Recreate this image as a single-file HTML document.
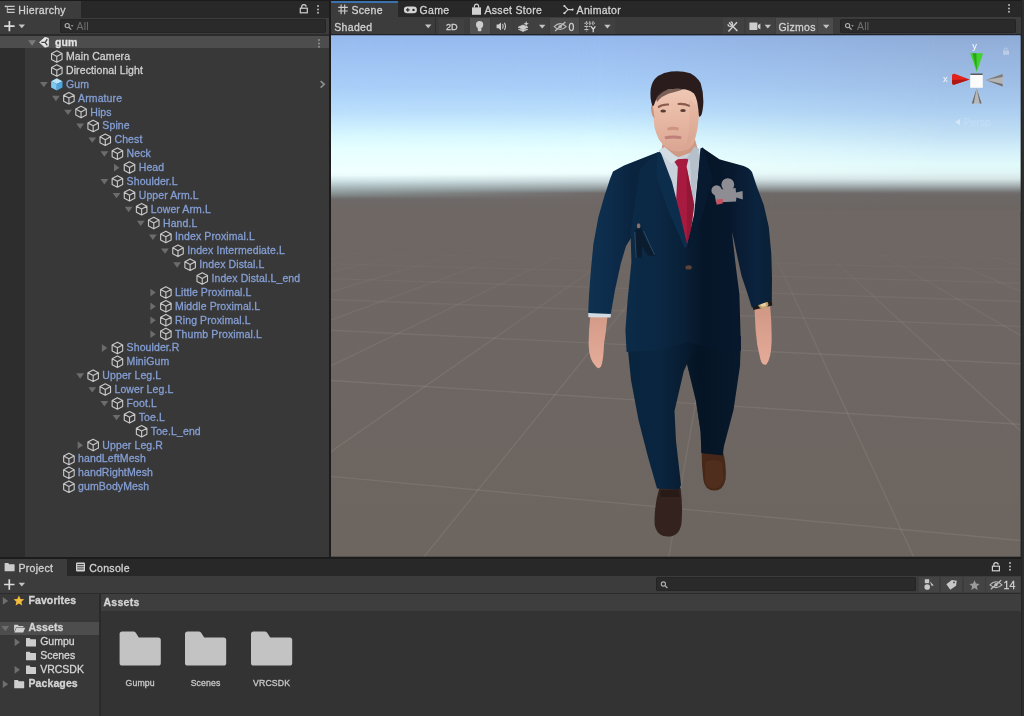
<!DOCTYPE html>
<html lang="en"><head><meta charset="utf-8"><title>Unity - gum</title>
<style>
html,body{margin:0;padding:0;background:#383838;}
body{width:1024px;height:716px;overflow:hidden;font-family:"Liberation Sans",sans-serif;font-size:10.5px;color:#d0d0d0;}
#app{filter:blur(0.45px);will-change:transform;position:relative;width:1024px;height:716px;overflow:hidden;background:#383838;}
#app div,#app svg,#app span{position:absolute;}
.t{-webkit-text-stroke:0.3px;white-space:nowrap;line-height:13.9px;height:13.9px;letter-spacing:0.1px;}
.b{font-weight:bold;letter-spacing:0.1px;}
.ic{overflow:visible;}
#hier{left:0;top:0;width:329px;height:557px;}
.gutter{left:0;top:35px;width:25.4px;height:522px;background:#2d2d2d;}
.scenerow{left:0;width:329px;height:12.4px;background:#4d4d4d;}
.kebab{width:2px;height:2px;background:#b8b8b8;border-radius:1px;box-shadow:0 3.4px 0 #b8b8b8,0 6.8px 0 #b8b8b8;}
.tabbar{background:#282828;height:17.5px;}
.tab{background:#3c3c3c;height:17.5px;top:0;}
.tl{-webkit-text-stroke:0.3px;white-space:nowrap;line-height:17px;height:17px;letter-spacing:0.3px;color:#d2d2d2;top:2.2px;}
.toolbar{background:#3c3c3c;height:17.5px;}
.search{background:#2a2a2a;border-radius:2.5px;height:13px;box-shadow:inset 0 0 0 0.6px #212121;}
.ph{color:#707070;white-space:nowrap;line-height:13px;letter-spacing:0.2px;}

</style></head>
<body>
<div id="app">
<div style="left:0;top:0;width:1024px;height:18px;background:#282828"></div>
<div style="left:0;top:0;width:1024px;height:1px;background:#1b1b1b"></div>
<div class="tab" style="left:0;top:1px;width:80.5px;height:17px"></div>

<div class="tl" style="left:18.3px">Hierarchy</div>

<div class="kebab" style="left:317.2px;top:4.6px;background:#b8b8b8;box-shadow:0 3.4px 0 #b8b8b8,0 6.8px 0 #b8b8b8"></div>
<div class="toolbar" style="left:0;top:18px;width:329px;height:17px"></div>


<div class="search" style="left:60px;top:19.2px;width:265.5px;height:13.6px"></div>

<div class="ph" style="left:76.5px;top:19.6px">All</div>
<div style="left:0;top:34.2px;width:329px;height:1.6px;background:#2b2b2b"></div>
<div style="left:329px;top:0;width:2px;height:558px;background:#1c1c1c"></div>
<div class="tab" style="left:331px;top:1px;width:67.2px;height:16.4px"></div>
<div style="left:331px;top:1px;width:67.2px;height:1.8px;background:#3a72ad"></div>

<div class="tl" style="left:351.5px">Scene</div>

<div class="tl" style="left:419.6px">Game</div>

<div class="tl" style="left:484.5px">Asset Store</div>

<div class="tl" style="left:576.6px">Animator</div>
<div class="kebab" style="left:1008.4px;top:4.4px;background:#b8b8b8;box-shadow:0 3.4px 0 #b8b8b8,0 6.8px 0 #b8b8b8"></div>
<div class="toolbar" style="left:331px;top:17.2px;width:690px;height:17.6px"></div>
<div class="tl" style="left:334.3px;top:18.8px;line-height:17px">Shaded</div>

<div style="left:434.6px;top:18px;width:1px;height:17px;background:#2e2e2e"></div>
<div style="left:439px;top:18.6px;width:25px;height:15.6px;background:#414141"></div>
<div class="tl" style="left:446px;top:18.6px;font-size:9.2px;letter-spacing:0">2D</div>
<div style="left:469.6px;top:18.4px;width:20.4px;height:16px;background:#515151"></div>

<div style="left:491px;top:18.4px;width:21.6px;height:16px;background:#404040"></div>

<div style="left:513.6px;top:18.4px;width:35.6px;height:16px;background:#404040"></div>


<div style="left:550.4px;top:18.4px;width:28.4px;height:16px;background:#4a4a4a"></div>

<div class="tl" style="left:568.6px;top:18.8px;letter-spacing:0">0</div>
<div style="left:580px;top:18.4px;width:34.6px;height:16px;background:#404040"></div>


<div style="left:722.6px;top:18.4px;width:21px;height:16px;background:#414141"></div>

<div style="left:745.6px;top:18.4px;width:29px;height:16px;background:#414141"></div>


<div style="left:775.8px;top:18.4px;width:57.6px;height:16px;background:#4b4b4b"></div>
<div class="tl" style="left:778.4px;top:18.8px">Gizmos</div>
<div style="left:816.6px;top:18.4px;width:1px;height:16px;background:#424242"></div>

<div class="search" style="left:840.4px;top:19.2px;width:176px;height:13.6px"></div>

<div class="ph" style="left:857px;top:19.6px">All</div>
<div style="left:331px;top:34px;width:690px;height:1.6px;background:#1f2329"></div>
<div style="left:1020.6px;top:0;width:3.4px;height:716px;background:#232323"></div>
<div style="left:1022.4px;top:0;width:1.6px;height:716px;background:#2d2d2d"></div>
<div id="hier">
<div class="gutter"></div>
<div class="scenerow" style="top:35.90px"></div>


<div class="t b" style="left:55.0px;top:36.15px;color:#e2e2e2">gum</div>
<div class="kebab" style="left:317.5px;top:38.50px;background:#909090;box-shadow:0 3.4px 0 #909090,0 6.8px 0 #909090"></div>

<div class="t" style="left:66.00px;top:50.03px;color:#d0d0d0">Main Camera</div>

<div class="t" style="left:66.00px;top:63.90px;color:#d0d0d0">Directional Light</div>



<div class="t" style="left:66.00px;top:77.78px;color:#859fd4">Gum</div>


<div class="t" style="left:78.12px;top:91.65px;color:#859fd4">Armature</div>


<div class="t" style="left:90.24px;top:105.53px;color:#859fd4">Hips</div>


<div class="t" style="left:102.36px;top:119.40px;color:#859fd4">Spine</div>


<div class="t" style="left:114.48px;top:133.27px;color:#859fd4">Chest</div>


<div class="t" style="left:126.60px;top:147.15px;color:#859fd4">Neck</div>


<div class="t" style="left:138.72px;top:161.02px;color:#859fd4">Head</div>


<div class="t" style="left:126.60px;top:174.90px;color:#859fd4">Shoulder.L</div>


<div class="t" style="left:138.72px;top:188.77px;color:#859fd4">Upper Arm.L</div>


<div class="t" style="left:150.84px;top:202.65px;color:#859fd4">Lower Arm.L</div>


<div class="t" style="left:162.96px;top:216.52px;color:#859fd4">Hand.L</div>


<div class="t" style="left:175.08px;top:230.40px;color:#859fd4">Index Proximal.L</div>


<div class="t" style="left:187.20px;top:244.27px;color:#859fd4">Index Intermediate.L</div>


<div class="t" style="left:199.32px;top:258.15px;color:#859fd4">Index Distal.L</div>

<div class="t" style="left:211.44px;top:272.02px;color:#859fd4">Index Distal.L_end</div>


<div class="t" style="left:175.08px;top:285.90px;color:#859fd4">Little Proximal.L</div>


<div class="t" style="left:175.08px;top:299.77px;color:#859fd4">Middle Proximal.L</div>


<div class="t" style="left:175.08px;top:313.65px;color:#859fd4">Ring Proximal.L</div>


<div class="t" style="left:175.08px;top:327.52px;color:#859fd4">Thumb Proximal.L</div>


<div class="t" style="left:126.60px;top:341.40px;color:#859fd4">Shoulder.R</div>

<div class="t" style="left:126.60px;top:355.27px;color:#859fd4">MiniGum</div>


<div class="t" style="left:102.36px;top:369.15px;color:#859fd4">Upper Leg.L</div>


<div class="t" style="left:114.48px;top:383.02px;color:#859fd4">Lower Leg.L</div>


<div class="t" style="left:126.60px;top:396.90px;color:#859fd4">Foot.L</div>


<div class="t" style="left:138.72px;top:410.77px;color:#859fd4">Toe.L</div>

<div class="t" style="left:150.84px;top:424.65px;color:#859fd4">Toe.L_end</div>


<div class="t" style="left:102.36px;top:438.52px;color:#859fd4">Upper Leg.R</div>

<div class="t" style="left:78.12px;top:452.40px;color:#859fd4">handLeftMesh</div>

<div class="t" style="left:78.12px;top:466.27px;color:#859fd4">handRightMesh</div>

<div class="t" style="left:78.12px;top:480.15px;color:#859fd4">gumBodyMesh</div>
</div>
<svg id="scene" style="left:0;top:0" width="1024" height="716" viewBox="0 0 1024 716">
<defs>
<linearGradient id="sky" gradientUnits="userSpaceOnUse" x1="0" y1="35" x2="0" y2="210">
<stop offset="0.0000" stop-color="#96b9ee"/>
<stop offset="0.1429" stop-color="#9fc3f3"/>
<stop offset="0.2914" stop-color="#a8cef8"/>
<stop offset="0.4343" stop-color="#b9defc"/>
<stop offset="0.5771" stop-color="#d7f8ff"/>
<stop offset="0.6514" stop-color="#e6ffff"/>
<stop offset="0.7714" stop-color="#f0ffff"/>
<stop offset="0.7943" stop-color="#ecfcfc"/>
<stop offset="0.8343" stop-color="#c8d7da"/>
<stop offset="0.8743" stop-color="#96a0a2"/>
<stop offset="0.8937" stop-color="#7d8080"/>
<stop offset="0.9040" stop-color="#706a69"/>
<stop offset="1.0000" stop-color="#6e6764"/>
</linearGradient>
<linearGradient id="skyL" gradientUnits="userSpaceOnUse" x1="0" y1="35" x2="0" y2="210">
<stop offset="0.0000" stop-color="#96b9ee"/>
<stop offset="0.1429" stop-color="#9fc3f3"/>
<stop offset="0.2914" stop-color="#a8cef8"/>
<stop offset="0.4343" stop-color="#b9defc"/>
<stop offset="0.5771" stop-color="#d7f8ff"/>
<stop offset="0.6514" stop-color="#e6ffff"/>
<stop offset="0.7771" stop-color="#f0ffff"/>
<stop offset="0.8023" stop-color="#ecfcfc"/>
<stop offset="0.8343" stop-color="#cde1e4"/>
<stop offset="0.8743" stop-color="#a5b4b6"/>
<stop offset="0.9143" stop-color="#828a8a"/>
<stop offset="0.9337" stop-color="#706e6e"/>
<stop offset="0.9429" stop-color="#6e6968"/>
<stop offset="1.0000" stop-color="#6e6764"/>
</linearGradient>
<linearGradient id="skyR" gradientUnits="userSpaceOnUse" x1="0" y1="35" x2="0" y2="210">
<stop offset="0.0000" stop-color="#8facd7"/>
<stop offset="0.2914" stop-color="#a0c0e8"/>
<stop offset="0.4343" stop-color="#accef0"/>
<stop offset="0.5771" stop-color="#c3e1f5"/>
<stop offset="0.6514" stop-color="#d2eefa"/>
<stop offset="0.7429" stop-color="#e1fafa"/>
<stop offset="0.7829" stop-color="#e0f6f6"/>
<stop offset="0.8217" stop-color="#d7e6e8"/>
<stop offset="0.8503" stop-color="#b4c0c2"/>
<stop offset="0.8789" stop-color="#8c9293"/>
<stop offset="0.9029" stop-color="#706c6b"/>
<stop offset="0.9200" stop-color="#6c6866"/>
<stop offset="1.0000" stop-color="#6c6562"/>
</linearGradient>
<linearGradient id="hfade" gradientUnits="userSpaceOnUse" x1="600" y1="0" x2="940" y2="0"><stop offset="0" stop-color="#fff" stop-opacity="0"/><stop offset="1" stop-color="#fff" stop-opacity="1"/></linearGradient>
<mask id="hmask" maskUnits="userSpaceOnUse" x="331" y="30" width="700" height="190"><rect x="331" y="30" width="700" height="190" fill="url(#hfade)"/></mask>
<linearGradient id="hfadeL" gradientUnits="userSpaceOnUse" x1="340" y1="0" x2="600" y2="0"><stop offset="0" stop-color="#fff" stop-opacity="1"/><stop offset="1" stop-color="#fff" stop-opacity="0"/></linearGradient>
<mask id="hmaskL" maskUnits="userSpaceOnUse" x="331" y="30" width="700" height="190"><rect x="331" y="30" width="700" height="190" fill="url(#hfadeL)"/></mask>
<linearGradient id="ground" gradientUnits="userSpaceOnUse" x1="0" y1="210" x2="0" y2="557">
<stop offset="0" stop-color="#6e6764"/>
<stop offset="1" stop-color="#6c6560"/>
</linearGradient>
<clipPath id="sc"><rect x="331.0" y="35.5" width="689.6" height="521.1"/></clipPath>
</defs>
<g clip-path="url(#sc)">
<rect x="331.0" y="35" width="689.6" height="176" fill="url(#sky)"/>
<rect x="331.0" y="35" width="689.6" height="176" fill="url(#skyL)" mask="url(#hmaskL)"/>
<rect x="331.0" y="35" width="689.6" height="176" fill="url(#skyR)" mask="url(#hmask)"/>
<rect x="331.0" y="210" width="689.6" height="347" fill="url(#ground)"/>
<linearGradient id="gfade" gradientUnits="userSpaceOnUse" x1="0" y1="215.0" x2="0" y2="558.6"><stop offset="0.000" stop-color="#fff" stop-opacity="0.000"/><stop offset="0.043" stop-color="#fff" stop-opacity="0.000"/><stop offset="0.087" stop-color="#fff" stop-opacity="0.000"/><stop offset="0.130" stop-color="#fff" stop-opacity="0.209"/><stop offset="0.174" stop-color="#fff" stop-opacity="0.402"/><stop offset="0.217" stop-color="#fff" stop-opacity="0.546"/><stop offset="0.261" stop-color="#fff" stop-opacity="0.658"/><stop offset="0.304" stop-color="#fff" stop-opacity="0.747"/><stop offset="0.348" stop-color="#fff" stop-opacity="0.820"/><stop offset="0.391" stop-color="#fff" stop-opacity="0.881"/><stop offset="0.435" stop-color="#fff" stop-opacity="0.933"/><stop offset="0.478" stop-color="#fff" stop-opacity="0.977"/><stop offset="0.522" stop-color="#fff" stop-opacity="1.000"/><stop offset="0.565" stop-color="#fff" stop-opacity="1.000"/><stop offset="0.609" stop-color="#fff" stop-opacity="1.000"/><stop offset="0.652" stop-color="#fff" stop-opacity="1.000"/><stop offset="0.696" stop-color="#fff" stop-opacity="1.000"/><stop offset="0.739" stop-color="#fff" stop-opacity="1.000"/><stop offset="0.783" stop-color="#fff" stop-opacity="1.000"/><stop offset="0.826" stop-color="#fff" stop-opacity="1.000"/><stop offset="0.870" stop-color="#fff" stop-opacity="1.000"/><stop offset="0.913" stop-color="#fff" stop-opacity="1.000"/><stop offset="0.957" stop-color="#fff" stop-opacity="1.000"/><stop offset="1.000" stop-color="#fff" stop-opacity="1.000"/></linearGradient><mask id="gmask" maskUnits="userSpaceOnUse" x="327.0" y="213.0" width="697.6" height="349.6"><rect x="327.0" y="213.0" width="697.6" height="349.6" fill="url(#gfade)"/></mask><g mask="url(#gmask)"><g stroke="#e8dcd0" stroke-opacity="0.10" stroke-width="1.4"><line x1="329.0" y1="476.2" x2="1022.6" y2="540.7"/><line x1="329.0" y1="380.3" x2="1022.6" y2="424.6"/><line x1="329.0" y1="330.2" x2="1022.6" y2="363.9"/><line x1="329.0" y1="299.4" x2="1022.6" y2="326.6"/><line x1="329.0" y1="278.6" x2="1022.6" y2="301.4"/><line x1="329.0" y1="263.6" x2="1022.6" y2="283.2"/><line x1="329.0" y1="252.2" x2="1022.6" y2="269.5"/><line x1="329.0" y1="243.3" x2="1022.6" y2="258.7"/><line x1="329.0" y1="236.2" x2="1022.6" y2="250.1"/><line x1="329.0" y1="230.3" x2="1022.6" y2="243.0"/><line x1="329.0" y1="225.4" x2="1022.6" y2="237.0"/><line x1="329.0" y1="221.3" x2="1022.6" y2="232.0"/><line x1="329.0" y1="217.7" x2="1022.6" y2="227.7"/><line x1="359.1" y1="215.0" x2="1022.6" y2="223.9"/><line x1="577.2" y1="215.0" x2="1022.6" y2="220.6"/><line x1="795.2" y1="215.0" x2="1022.6" y2="217.7"/><line x1="1013.3" y1="215.0" x2="1022.6" y2="215.1"/><line x1="329.0" y1="215.6" x2="334.3" y2="215.0"/><line x1="329.0" y1="219.0" x2="362.4" y2="215.0"/><line x1="329.0" y1="222.9" x2="390.6" y2="215.0"/><line x1="329.0" y1="227.6" x2="418.7" y2="215.0"/><line x1="329.0" y1="233.1" x2="446.8" y2="215.0"/><line x1="329.0" y1="239.8" x2="475.0" y2="215.0"/><line x1="329.0" y1="248.2" x2="503.1" y2="215.0"/><line x1="329.0" y1="258.9" x2="531.2" y2="215.0"/><line x1="329.0" y1="272.9" x2="559.4" y2="215.0"/><line x1="329.0" y1="292.3" x2="587.5" y2="215.0"/><line x1="329.0" y1="320.8" x2="615.6" y2="215.0"/><line x1="329.0" y1="366.7" x2="643.8" y2="215.0"/><line x1="329.0" y1="453.0" x2="671.9" y2="215.0"/><line x1="422.6" y1="558.6" x2="700.0" y2="215.0"/><line x1="668.5" y1="558.6" x2="728.2" y2="215.0"/><line x1="914.4" y1="558.6" x2="756.3" y2="215.0"/><line x1="1022.6" y1="432.7" x2="784.5" y2="215.0"/><line x1="1022.6" y1="336.6" x2="812.6" y2="215.0"/><line x1="1022.6" y1="292.0" x2="840.7" y2="215.0"/><line x1="1022.6" y1="266.3" x2="868.9" y2="215.0"/><line x1="1022.6" y1="249.6" x2="897.0" y2="215.0"/><line x1="1022.6" y1="237.9" x2="925.1" y2="215.0"/><line x1="1022.6" y1="229.2" x2="953.3" y2="215.0"/><line x1="1022.6" y1="222.5" x2="981.4" y2="215.0"/><line x1="1022.6" y1="217.1" x2="1009.5" y2="215.0"/></g></g>
<g id="figure">
<defs>
<linearGradient id="armL" gradientUnits="userSpaceOnUse" x1="588" y1="0" x2="632" y2="0">
<stop offset="0" stop-color="#0f3150"/><stop offset="0.5" stop-color="#0d2c4b"/><stop offset="1" stop-color="#0a243f"/>
</linearGradient>
<linearGradient id="armR" gradientUnits="userSpaceOnUse" x1="732" y1="0" x2="772" y2="0">
<stop offset="0" stop-color="#08192e"/><stop offset="0.6" stop-color="#0b233e"/><stop offset="1" stop-color="#092036"/>
</linearGradient>
<linearGradient id="suit" gradientUnits="userSpaceOnUse" x1="625" y1="0" x2="742" y2="0">
<stop offset="0" stop-color="#0b2b48"/><stop offset="0.3" stop-color="#0b2743"/><stop offset="0.5" stop-color="#092037"/><stop offset="0.66" stop-color="#061628"/><stop offset="1" stop-color="#07182d"/>
</linearGradient>
<linearGradient id="pants" gradientUnits="userSpaceOnUse" x1="626" y1="0" x2="742" y2="0">
<stop offset="0" stop-color="#09243d"/><stop offset="0.3" stop-color="#0a253f"/><stop offset="0.5" stop-color="#081c31"/><stop offset="0.62" stop-color="#051424"/><stop offset="1" stop-color="#07192c"/>
</linearGradient>
<linearGradient id="skin" gradientUnits="userSpaceOnUse" x1="0" y1="85" x2="0" y2="148">
<stop offset="0" stop-color="#efcab6"/><stop offset="0.5" stop-color="#e8b9a4"/><stop offset="1" stop-color="#dba794"/>
</linearGradient>
<linearGradient id="hand" gradientUnits="userSpaceOnUse" x1="0" y1="312" x2="0" y2="370">
<stop offset="0" stop-color="#d19986"/><stop offset="1" stop-color="#e6ad9a"/>
</linearGradient>
</defs>
<!-- shoes -->
<path d="M659.4 488 L680.6 488 Q683 508 681.4 524 Q679 536.6 668 536.6 Q656.4 536.4 654.6 524 Q654 506 659.4 488Z" fill="#33221e"/>
<path d="M661 490 L679 490 L679.6 497 L660.2 497Z" fill="#1f1512" opacity="0.6"/>
<path d="M701.6 450 L722.4 449.4 Q727 466 725.6 479 Q723.4 491 714 490.6 Q705 490.2 703.4 480 Q701.6 466 701.6 450Z" fill="#472818"/>
<path d="M705 462 Q713 458 722 462 L723.6 478 Q721 489 714 488.6 Q706.4 488.4 705.4 480Z" fill="#54301f" opacity="0.7"/>
<!-- legs -->
<path d="M626.5 336 L741 336 L740 366 L733.5 410 L724 446 L722.6 455.4 L701.4 453 L700.6 432 L696 401 L687 364 L683.8 371 L674.5 411 L676 441 L681 485 L679 489.6 L657 488.4 L648 457 L638.5 420 L631 380Z" fill="url(#pants)"/>
<path d="M687 364 L696 401 L700.6 432 L701.4 453 L708 453.6 L706 420 L700 380 L694 352Z" fill="#061626" opacity="0.55"/>
<!-- hands -->
<path d="M590.4 315 L607.6 315 Q606 332 604 344 Q603.6 360 601 366.6 Q598 370 595.6 366 Q589.2 360 588.6 345 Q588.6 330 590.4 315Z" fill="url(#hand)"/>
<path d="M754.4 306 L770 304 Q772 325 771.6 342 Q771 359 766.4 364.4 Q762.4 366 760.6 360 Q756.4 345 755.6 330Z" fill="url(#hand)"/>
<!-- watch -->
<path d="M751.6 303 L771.6 298.4 L772.2 305.6 L753.4 310Z" fill="#1c1a18"/>
<ellipse cx="763.2" cy="304.4" rx="5.2" ry="4.2" fill="#c1a06c"/>
<ellipse cx="763.2" cy="304.4" rx="2.8" ry="2.2" fill="#e0cfa4"/>
<!-- cuff -->
<path d="M588.2 312.6 L611 313 L610.6 317.4 L588.4 317.2Z" fill="#d2dae2"/>
<!-- left arm -->
<path d="M657 152.6 L624 165.6 L613 171.4 L610 179 L607.4 187 L604.4 196 L598.4 217 L593.4 244 L590.9 270 L589 295 L588.2 313 L610.8 314 L615 290 L620.7 264 L626 246 L631 238 L650 200Z" fill="url(#armL)"/>
<!-- right arm -->
<path d="M720 159.6 L743.7 166 Q749.6 168 752 172 L757 187 L763.8 205 L768.8 227 L771.3 254 L772 278 L771.8 300 L751.8 307.4 L747 292 L741.6 276 L737.2 256 L733 236 L726 210Z" fill="url(#armR)"/>
<!-- torso -->
<path d="M657.6 152 L640 170 L630.6 234 L631.4 262 L627.6 300 L625.4 330 L626.6 352 L660 350 L688 342 L715 350 L741 351 L740.6 336 L739.4 294 L736 268 L732.6 238 L730 200 L722 161 L702 147.5 L688 200 Z" fill="url(#suit)"/>
<!-- shirt -->
<path d="M659 151 L678 146 L699.5 149.5 L700 158 L694 215 L687 244 L680 215 L664 165Z" fill="#c9d2dc"/>
<path d="M690 160 L699.6 152 L699 168 L692.6 212 Z" fill="#aab4c0" opacity="0.6"/>
<!-- tie -->
<path d="M673 159.5 L688.6 158.6 L686.6 166.6 L694.2 205 L691 230 L686.6 247 L680.4 230 L676 202 L677.8 167Z" fill="#a81b40"/>
<path d="M686.6 167 L694.2 205 L691 230 L686.6 247 L687 210Z" fill="#84142f" opacity="0.6"/>
<!-- lapels -->
<path d="M700.4 148.6 L703 147.6 L713 178 L703 214 L689.6 249 L687 245.6 L695 214Z" fill="#081a2f"/>
<path d="M657.4 152.4 L660.4 151.4 L672 182 L680 214 L687.4 245.4 L684.6 248 L668 210 L656 176Z" fill="#0d2d4c"/>
<!-- pocket square (camera icon) -->
<circle cx="716.6" cy="190.4" r="5.2" fill="#8e8d93"/>
<circle cx="727.8" cy="184.6" r="6.4" fill="#8e8d93"/>
<path d="M714 190 L735.6 188 L736 192.6 L742.6 191 L742.8 199.4 L736.4 197.6 L736 201.6 L716 202.4Z" fill="#8e8d93"/>
<path d="M716.4 199.6 L723 199 L722.6 203.6 L716.6 204.8Z" fill="#c8505e"/>
<!-- mini figure in pocket -->
<ellipse cx="638.6" cy="225.8" rx="1.8" ry="2.6" fill="#8a6e68"/>
<path d="M635.6 229 L641.6 228.4 L646 240 L655.6 256 L648 255.4 L642 246 L641.6 258 L635.6 257Z" fill="#0a1c2e"/>
<path d="M634.8 232 L636.2 257.6 M643.6 231 L654.6 255" stroke="#3c5872" stroke-width="0.7" fill="none"/>
<!-- button -->
<ellipse cx="688.6" cy="267.4" rx="3.2" ry="2.2" fill="#5e4238"/>
<!-- neck -->
<path d="M664 136 L694 136 L698 150 L679 157 L661 152Z" fill="#cf9a84"/>
<!-- collar -->
<path d="M658.4 150.4 L664.6 147 L678.6 158.6 L671.6 164Z" fill="#d3dbe3"/>
<path d="M699.4 149 L694.6 146.6 L686.4 158.4 L694 162.6Z" fill="#b6c0ca"/>
<!-- face -->
<path d="M652.6 100 Q652 88 662 84 L690 83 Q699.4 88 699.2 100 Q699.6 114 697.8 126.8 Q696.6 134 695 139.4 Q693 146 688 149.6 Q679 153 670.4 150 Q664 147 659 139.4 Q655.6 133 654.4 126.8 Q652.8 114 652.6 100Z" fill="url(#skin)"/>
<path d="M689 100 Q698.4 104 699 112 Q698.6 124 696 133 Q692 142 686 146 Q691 130 689 100Z" fill="#c98f7a" opacity="0.14"/>
<!-- ear -->
<path d="M652.6 104 Q650.4 105 651.2 111 Q652.2 117 654.6 118Z" fill="#c9937e"/>
<!-- hair -->
<path d="M652.4 106 Q649.6 98 650.7 89 Q652 80.6 658 76 Q664 72.4 671 71.6 Q681 70.4 690.3 73.2 Q697 76.6 700.6 83 Q703.6 92 703.4 102 Q703 110 701.6 114.4 Q700.4 117 699 116.8 Q698.4 108 697.2 101.7 Q696.4 97.4 694 93.6 Q690.6 90.6 686 89.6 Q678 88 668 89.6 Q661.6 92 657.8 96.6 Q655.4 100.6 653.8 105.6Z" fill="#2a1c1d"/>
<path d="M656 98 Q660 91 668 89.6 Q676 88 684 89.2 Q676 91.6 669 93.6 Q661 96.6 657 102Z" fill="#4a3430" opacity="0.7"/>
<!-- brows / eyes / nose / mouth -->
<path d="M657.6 106.4 Q662 103.2 669 103.6 L669 105.6 Q662.6 105.2 658.4 108.2Z" fill="#8a5a4e"/>
<path d="M677.6 103 Q684 102 690 105 L689.6 107 Q684 104.4 677.8 105Z" fill="#8a5a4e"/>
<ellipse cx="663.2" cy="111" rx="2.8" ry="1.5" fill="#5a3c36"/>
<ellipse cx="683" cy="110.6" rx="2.8" ry="1.5" fill="#5a3c36"/>
<path d="M667 128 Q672.6 125.4 679 127.8 L678 130.4 Q672.6 129.4 668 130.6Z" fill="#d09582"/>
<path d="M664.6 136.6 Q672.6 134.6 681.6 136.4 L681 139 Q672.6 137.8 665.2 139.2Z" fill="#c07f78"/>
</g>

<g id="gizmo">
<text x="974.6" y="49.2" font-family="Liberation Sans, sans-serif" font-size="9.4" fill="#ffffff" text-anchor="middle">y</text>
<text x="945.4" y="81.6" font-family="Liberation Sans, sans-serif" font-size="9.4" fill="#ffffff" fill-opacity="0.9" text-anchor="middle">x</text>
<path d="M970.2 53.2 L983 53.2 L976.8 72Z" fill="#3fd22a"/>
<path d="M972.6 53.2 L976.4 53.2 L976.8 71Z" fill="#2da220"/>
<path d="M952 75.6 Q952 73.4 954.6 73.8 L969.6 79.4 L954.6 84.6 Q952 85 952 82.8Z" fill="#e2231b"/>
<path d="M952 80 L969.6 79.4 L954.6 84.6 Q952 85 952 82.8Z" fill="#b01813"/>
<path d="M985.8 80 L1002.6 74 L1002.6 86.4Z" fill="#b4b4b4"/>
<path d="M985.8 80 L1002.6 74 L1002.6 77Z" fill="#7c7c7c"/>
<path d="M985.8 80 L1002.6 84 L1002.6 86.4Z" fill="#6e6e6e"/>
<path d="M976.6 88.6 L971.8 103.4 L981.6 103.4Z" fill="#b8b8b8"/>
<path d="M976.6 88.6 L971.8 103.4 L973.8 103.4Z" fill="#6c6c6c"/>
<path d="M976.6 88.6 L979.8 103.4 L981.6 103.4Z" fill="#6c6c6c"/>
<path d="M970.6 73.6 L982.6 73.6 L982.6 75.4 L970.6 75.4Z" fill="#5a5a5a"/>
<rect x="970.2" y="75" width="12.6" height="12.8" fill="#fbfbfb"/>
<g opacity="0.42"><rect x="1003" y="50.4" width="6" height="4.4" fill="#f0f0f0"/><path d="M1004 50.4 V49.8 A1.8 1.8 0 0 1 1007.6 49.8" fill="none" stroke="#f0f0f0" stroke-width="1"/></g>
<path d="M960 118.8 L955 122 L960 125.2Z" fill="#ffffff" opacity="0.4"/><text x="963.6" y="125.6" font-family="Liberation Sans, sans-serif" font-size="10.4" fill="#ffffff" opacity="0.17">Persp</text>
</g>

</g>
</svg>
<div style="left:0;top:556.6px;width:1021px;height:2.2px;background:#1c1c1c"></div>
<div style="left:0;top:558.6px;width:1020.6px;height:17.6px;background:#282828"></div>
<div class="tab" style="left:0;top:559px;width:66.5px;height:17.4px"></div>

<div class="tl" style="left:18.4px;top:560.2px">Project</div>

<div class="tl" style="left:89.2px;top:560.2px">Console</div>

<div class="kebab" style="left:1008.6px;top:562.4px;background:#b8b8b8;box-shadow:0 3.4px 0 #b8b8b8,0 6.8px 0 #b8b8b8"></div>
<div class="toolbar" style="left:0;top:576.2px;width:1020.6px;height:16.8px"></div>


<div class="search" style="left:656px;top:577.4px;width:260px;height:13.6px"></div>

<div style="left:919px;top:577px;width:20px;height:15.4px;background:#444444"></div>
<div style="left:941.4px;top:577px;width:20.6px;height:15.4px;background:#444444"></div>
<div style="left:964px;top:577px;width:20.6px;height:15.4px;background:#444444"></div>
<div style="left:986.4px;top:577px;width:34px;height:15.4px;background:#444444"></div>




<div class="tl" style="left:1003.6px;top:577px;letter-spacing:0">14</div>
<div style="left:0;top:592.8px;width:1020.6px;height:1px;background:#2b2b2b"></div>
<div style="left:0;top:593.6px;width:99.4px;height:123px;background:#383838"></div>
<div style="left:99.4px;top:593.6px;width:1.2px;height:123px;background:#2a2a2a"></div>
<div style="left:100.6px;top:593.6px;width:920px;height:17.4px;background:#3e3e3e"></div>
<div style="left:100.6px;top:611px;width:920px;height:105px;background:#333333"></div>
<div class="t b" style="left:103.4px;top:595.6px;color:#d4d4d4;letter-spacing:0.3px">Assets</div>
<div class="t b" style="left:28.4px;top:593.80px;color:#d4d4d4;letter-spacing:0.12px;">Favorites</div>
<div style="left:0;top:621.66px;width:99.4px;height:13.4px;background:#4d4d4d"></div><div class="t b" style="left:28.4px;top:621.36px;color:#d4d4d4;letter-spacing:0.12px;">Assets</div>
<div class="t" style="left:40.2px;top:635.14px;color:#d4d4d4;letter-spacing:0;">Gumpu</div>
<div class="t" style="left:40.2px;top:648.92px;color:#d4d4d4;letter-spacing:0;">Scenes</div>
<div class="t" style="left:40.2px;top:662.70px;color:#d4d4d4;letter-spacing:0;">VRCSDK</div>
<div class="t b" style="left:28.4px;top:677.03px;color:#d4d4d4;letter-spacing:0.12px;">Packages</div>

<div class="t" style="left:110.19999999999999px;width:60px;text-align:center;top:677.2px;font-size:8.7px;letter-spacing:0.15px;color:#c8c8c8">Gumpu</div>

<div class="t" style="left:175.6px;width:60px;text-align:center;top:677.2px;font-size:8.7px;letter-spacing:0.15px;color:#c8c8c8">Scenes</div>

<div class="t" style="left:241.60000000000002px;width:60px;text-align:center;top:677.2px;font-size:8.7px;letter-spacing:0.15px;color:#c8c8c8">VRCSDK</div>
<svg id="icons" style="left:0;top:0" width="1024" height="716" viewBox="0 0 1024 716">
<g transform="translate(4.3,5.4)"><path d="M0.6 1 H10.4 M3 4 H10.4 M3 7 H10.4" stroke="#c8c8c8" stroke-width="1.1" fill="none"/><path d="M3 1 V7.4" stroke="#c8c8c8" stroke-width="0.9" fill="none"/><path d="M0 1 L1.8 -0.2 V2.2Z" fill="#c8c8c8"/></g>
<g transform="translate(299.5,3.6)"><rect x="0.8" y="4.6" width="7" height="4.6" fill="none" stroke="#d0d0d0" stroke-width="1.2"/><path d="M2.2 4.6 V3.2 A2.2 2.2 0 0 1 6.6 3.2" fill="none" stroke="#d0d0d0" stroke-width="1.2"/></g>
<g transform="translate(3.9,20.6)"><path d="M5.5 0.3 V10.7 M0.3 5.5 H10.7" stroke="#dcdcdc" stroke-width="1.7" fill="none"/></g>
<g transform="translate(18.6,24.6)"><path d="M0 0 H6.4 L3.2 3.6Z" fill="#c4c4c4"/></g>
<g transform="translate(64.2,22.6)"><circle cx="3" cy="3" r="2.1" fill="none" stroke="#b0b0b0" stroke-width="1.1"/><path d="M4.6 4.6 L7 7" stroke="#b0b0b0" stroke-width="1.3"/><path d="M6.6 2.6 h2.6 l-1.3 1.6z" fill="#b0b0b0"/></g>
<g transform="translate(338.2,4.6)"><path d="M0 2.8 H9.6 M0 6.4 H9.6 M2.9 0 V9.6 M6.5 0 V9.6" stroke="#cfcfcf" stroke-width="1.1" fill="none"/></g>
<g transform="translate(403.6,6)"><rect x="0.3" y="0.6" width="13" height="6.6" rx="3.3" fill="#d4d4d4"/><path d="M2.4 3.9 H6 M4.2 2.1 V5.7" stroke="#282828" stroke-width="1.1"/><circle cx="9.9" cy="3.9" r="1.2" fill="#282828"/></g>
<g transform="translate(471,3.4)"><path d="M1 4 H10 V11.4 H1Z" fill="#d0d0d0"/><path d="M3.4 4.4 V2.8 A2.1 2.1 0 0 1 7.6 2.8 V4.4" fill="none" stroke="#d0d0d0" stroke-width="1.2"/></g>
<g transform="translate(563,4.6)"><path d="M1 1 L5 5 L1 9 M5 5 H10" stroke="#d0d0d0" stroke-width="1.2" fill="none"/><circle cx="1.4" cy="1.4" r="1.1" fill="#d0d0d0"/><circle cx="1.4" cy="8.6" r="1.1" fill="#d0d0d0"/><circle cx="9.6" cy="5" r="1.1" fill="#d0d0d0"/></g>
<g transform="translate(425,24.6)"><path d="M0 0 H6.4 L3.2 3.6Z" fill="#c4c4c4"/></g>
<g transform="translate(474.6,20.4)"><circle cx="5" cy="4.3" r="3.6" fill="#cdcdcd"/><rect x="3.2" y="7.4" width="3.6" height="3.4" rx="0.8" fill="#cdcdcd"/></g>
<g transform="translate(496,21.4)"><path d="M0.6 3.2 H2.6 L5 1 V9 L2.6 6.8 H0.6Z" fill="#cdcdcd"/><path d="M6.6 2.6 Q8 5 6.6 7.4 M8.4 1.4 Q10.6 5 8.4 8.6" stroke="#cdcdcd" stroke-width="1.1" fill="none"/></g>
<g transform="translate(517.6,20.6)"><path d="M0.6 6.6 L5.4 4.4 L10.4 6.6 L5.4 8.8Z M0.6 8.6 L5.4 10.8 L10.4 8.6" fill="#cdcdcd" stroke="#cdcdcd" stroke-width="0.8" stroke-linejoin="round"/><path d="M8.6 0.4 L9.3 2.4 L11.3 3.1 L9.3 3.8 L8.6 5.8 L7.9 3.8 L5.9 3.1 L7.9 2.4Z" fill="#cdcdcd"/></g>
<g transform="translate(539,24.8)"><path d="M0 0 H6.4 L3.2 3.6Z" fill="#c4c4c4"/></g>
<g transform="translate(553.6,21.2)"><path d="M0.6 5.4 Q6.5 -0.6 12.6 5.4 Q6.5 11 0.6 5.4Z" fill="none" stroke="#bdbdbd" stroke-width="1.1"/><circle cx="6.6" cy="5.4" r="1.7" fill="#bdbdbd"/><path d="M1.4 9.8 L11.8 0.8" stroke="#bdbdbd" stroke-width="1.2"/></g>
<g transform="translate(584.4,20.8)"><path d="M0 2.4 H10.6 M0 5.6 H6 M0 8.8 H5 M2.2 0.4 V10.6 M5.4 0.4 V6 M8.6 0.4 V4.8" stroke="#cdcdcd" stroke-width="1" fill="none" stroke-dasharray="1.6 0.8"/><path d="M6.6 5.6 L8.8 8.4 L11 5.6 M8.8 8.4 V11.4" stroke="#dedede" stroke-width="1.2" fill="none"/></g>
<g transform="translate(604.2,24.8)"><path d="M0 0 H6.4 L3.2 3.6Z" fill="#c4c4c4"/></g>
<g transform="translate(727,20.8)"><path d="M1.4 10.6 L10 1.4 M2 1.6 L10.4 10.2" stroke="#cdcdcd" stroke-width="1.5" fill="none"/><path d="M1 3.4 A2.3 2.3 0 1 0 3.6 1" stroke="#cdcdcd" stroke-width="1.3" fill="none"/></g>
<g transform="translate(749.4,22.4)"><rect x="0" y="0.2" width="8" height="7.4" rx="0.6" fill="#cdcdcd"/><path d="M8.6 2.6 L11 1 V7 L8.6 5.4Z" fill="#cdcdcd"/></g>
<g transform="translate(764.6,24.8)"><path d="M0 0 H6.4 L3.2 3.6Z" fill="#c4c4c4"/></g>
<g transform="translate(823,24.8)"><path d="M0 0 H6.4 L3.2 3.6Z" fill="#c4c4c4"/></g>
<g transform="translate(844.6,22.6)"><circle cx="3" cy="3" r="2.1" fill="none" stroke="#b0b0b0" stroke-width="1.1"/><path d="M4.6 4.6 L7 7" stroke="#b0b0b0" stroke-width="1.3"/><path d="M6.6 2.6 h2.6 l-1.3 1.6z" fill="#b0b0b0"/></g>

<g transform="translate(27.6,38.3)"><path d="M0.6 2 L8.4 2 L4.5 7.4Z" fill="#7c7c7c"/></g>
<g transform="translate(39,36.9) scale(0.9)"><path d="M0.5 6 L6.6 0.5 L10.4 1.5 L10.7 6 L10.4 10.5 L6.6 11.5Z" fill="#e6e6e6" stroke="#e6e6e6" stroke-width="0.8" stroke-linejoin="round"/><path d="M2.6 6 L6.8 6 M6.8 6 L9.2 2.6 M6.8 6 L9.2 9.4" fill="none" stroke="#454545" stroke-width="1.5"/></g>
<g transform="translate(50.1,49.88) scale(1.031)"><path d="M6.5 0.9 L11.6 3.6 L11.6 9.4 L6.5 12.1 L1.4 9.4 L1.4 3.6Z M1.4 3.6 L6.5 6.4 L11.6 3.6 M6.5 6.4 L6.5 12.1" fill="none" stroke="#c8c8c8" stroke-width="1.1" stroke-linejoin="round"/></g>
<g transform="translate(50.1,63.75) scale(1.031)"><path d="M6.5 0.9 L11.6 3.6 L11.6 9.4 L6.5 12.1 L1.4 9.4 L1.4 3.6Z M1.4 3.6 L6.5 6.4 L11.6 3.6 M6.5 6.4 L6.5 12.1" fill="none" stroke="#c8c8c8" stroke-width="1.1" stroke-linejoin="round"/></g>
<g transform="translate(39.3,79.92)"><path d="M0.6 2 L8.4 2 L4.5 7.4Z" fill="#6c6c6c"/></g>
<g transform="translate(50.1,77.62) scale(1.031)"><path d="M6.5 0.6 L12 3.4 L6.5 6.3 L1 3.4Z" fill="#b9e4fb"/><path d="M1 3.4 L6.5 6.3 L6.5 12.5 L1 9.6Z" fill="#7fc8f2"/><path d="M12 3.4 L6.5 6.3 L6.5 12.5 L12 9.6Z" fill="#4aa6e0"/></g>
<g transform="translate(319,79.83)"><path d="M1.6 1.2 L5.2 4.5 L1.6 7.8" fill="none" stroke="#8c8c8c" stroke-width="1.7"/></g>
<g transform="translate(51.42,93.8)"><path d="M0.6 2 L8.4 2 L4.5 7.4Z" fill="#6c6c6c"/></g>
<g transform="translate(62.22,91.5) scale(1.031)"><path d="M6.5 0.9 L11.6 3.6 L11.6 9.4 L6.5 12.1 L1.4 9.4 L1.4 3.6Z M1.4 3.6 L6.5 6.4 L11.6 3.6 M6.5 6.4 L6.5 12.1" fill="none" stroke="#c8c8c8" stroke-width="1.1" stroke-linejoin="round"/></g>
<g transform="translate(63.54,107.67)"><path d="M0.6 2 L8.4 2 L4.5 7.4Z" fill="#6c6c6c"/></g>
<g transform="translate(74.34,105.38) scale(1.031)"><path d="M6.5 0.9 L11.6 3.6 L11.6 9.4 L6.5 12.1 L1.4 9.4 L1.4 3.6Z M1.4 3.6 L6.5 6.4 L11.6 3.6 M6.5 6.4 L6.5 12.1" fill="none" stroke="#c8c8c8" stroke-width="1.1" stroke-linejoin="round"/></g>
<g transform="translate(75.66,121.55)"><path d="M0.6 2 L8.4 2 L4.5 7.4Z" fill="#6c6c6c"/></g>
<g transform="translate(86.46,119.25) scale(1.031)"><path d="M6.5 0.9 L11.6 3.6 L11.6 9.4 L6.5 12.1 L1.4 9.4 L1.4 3.6Z M1.4 3.6 L6.5 6.4 L11.6 3.6 M6.5 6.4 L6.5 12.1" fill="none" stroke="#c8c8c8" stroke-width="1.1" stroke-linejoin="round"/></g>
<g transform="translate(87.78,135.42)"><path d="M0.6 2 L8.4 2 L4.5 7.4Z" fill="#6c6c6c"/></g>
<g transform="translate(98.58,133.12) scale(1.031)"><path d="M6.5 0.9 L11.6 3.6 L11.6 9.4 L6.5 12.1 L1.4 9.4 L1.4 3.6Z M1.4 3.6 L6.5 6.4 L11.6 3.6 M6.5 6.4 L6.5 12.1" fill="none" stroke="#c8c8c8" stroke-width="1.1" stroke-linejoin="round"/></g>
<g transform="translate(99.9,149.3)"><path d="M0.6 2 L8.4 2 L4.5 7.4Z" fill="#6c6c6c"/></g>
<g transform="translate(110.7,147) scale(1.031)"><path d="M6.5 0.9 L11.6 3.6 L11.6 9.4 L6.5 12.1 L1.4 9.4 L1.4 3.6Z M1.4 3.6 L6.5 6.4 L11.6 3.6 M6.5 6.4 L6.5 12.1" fill="none" stroke="#c8c8c8" stroke-width="1.1" stroke-linejoin="round"/></g>
<g transform="translate(112.02,163.17)"><path d="M2 0.6 L7.4 4.5 L2 8.4Z" fill="#6c6c6c"/></g>
<g transform="translate(122.82,160.88) scale(1.031)"><path d="M6.5 0.9 L11.6 3.6 L11.6 9.4 L6.5 12.1 L1.4 9.4 L1.4 3.6Z M1.4 3.6 L6.5 6.4 L11.6 3.6 M6.5 6.4 L6.5 12.1" fill="none" stroke="#c8c8c8" stroke-width="1.1" stroke-linejoin="round"/></g>
<g transform="translate(99.9,177.05)"><path d="M0.6 2 L8.4 2 L4.5 7.4Z" fill="#6c6c6c"/></g>
<g transform="translate(110.7,174.75) scale(1.031)"><path d="M6.5 0.9 L11.6 3.6 L11.6 9.4 L6.5 12.1 L1.4 9.4 L1.4 3.6Z M1.4 3.6 L6.5 6.4 L11.6 3.6 M6.5 6.4 L6.5 12.1" fill="none" stroke="#c8c8c8" stroke-width="1.1" stroke-linejoin="round"/></g>
<g transform="translate(112.02,190.92)"><path d="M0.6 2 L8.4 2 L4.5 7.4Z" fill="#6c6c6c"/></g>
<g transform="translate(122.82,188.62) scale(1.031)"><path d="M6.5 0.9 L11.6 3.6 L11.6 9.4 L6.5 12.1 L1.4 9.4 L1.4 3.6Z M1.4 3.6 L6.5 6.4 L11.6 3.6 M6.5 6.4 L6.5 12.1" fill="none" stroke="#c8c8c8" stroke-width="1.1" stroke-linejoin="round"/></g>
<g transform="translate(124.14,204.8)"><path d="M0.6 2 L8.4 2 L4.5 7.4Z" fill="#6c6c6c"/></g>
<g transform="translate(134.94,202.5) scale(1.031)"><path d="M6.5 0.9 L11.6 3.6 L11.6 9.4 L6.5 12.1 L1.4 9.4 L1.4 3.6Z M1.4 3.6 L6.5 6.4 L11.6 3.6 M6.5 6.4 L6.5 12.1" fill="none" stroke="#c8c8c8" stroke-width="1.1" stroke-linejoin="round"/></g>
<g transform="translate(136.26,218.67)"><path d="M0.6 2 L8.4 2 L4.5 7.4Z" fill="#6c6c6c"/></g>
<g transform="translate(147.06,216.38) scale(1.031)"><path d="M6.5 0.9 L11.6 3.6 L11.6 9.4 L6.5 12.1 L1.4 9.4 L1.4 3.6Z M1.4 3.6 L6.5 6.4 L11.6 3.6 M6.5 6.4 L6.5 12.1" fill="none" stroke="#c8c8c8" stroke-width="1.1" stroke-linejoin="round"/></g>
<g transform="translate(148.38,232.55)"><path d="M0.6 2 L8.4 2 L4.5 7.4Z" fill="#6c6c6c"/></g>
<g transform="translate(159.18,230.25) scale(1.031)"><path d="M6.5 0.9 L11.6 3.6 L11.6 9.4 L6.5 12.1 L1.4 9.4 L1.4 3.6Z M1.4 3.6 L6.5 6.4 L11.6 3.6 M6.5 6.4 L6.5 12.1" fill="none" stroke="#c8c8c8" stroke-width="1.1" stroke-linejoin="round"/></g>
<g transform="translate(160.5,246.42)"><path d="M0.6 2 L8.4 2 L4.5 7.4Z" fill="#6c6c6c"/></g>
<g transform="translate(171.3,244.12) scale(1.031)"><path d="M6.5 0.9 L11.6 3.6 L11.6 9.4 L6.5 12.1 L1.4 9.4 L1.4 3.6Z M1.4 3.6 L6.5 6.4 L11.6 3.6 M6.5 6.4 L6.5 12.1" fill="none" stroke="#c8c8c8" stroke-width="1.1" stroke-linejoin="round"/></g>
<g transform="translate(172.62,260.3)"><path d="M0.6 2 L8.4 2 L4.5 7.4Z" fill="#6c6c6c"/></g>
<g transform="translate(183.42,258) scale(1.031)"><path d="M6.5 0.9 L11.6 3.6 L11.6 9.4 L6.5 12.1 L1.4 9.4 L1.4 3.6Z M1.4 3.6 L6.5 6.4 L11.6 3.6 M6.5 6.4 L6.5 12.1" fill="none" stroke="#c8c8c8" stroke-width="1.1" stroke-linejoin="round"/></g>
<g transform="translate(195.54,271.88) scale(1.031)"><path d="M6.5 0.9 L11.6 3.6 L11.6 9.4 L6.5 12.1 L1.4 9.4 L1.4 3.6Z M1.4 3.6 L6.5 6.4 L11.6 3.6 M6.5 6.4 L6.5 12.1" fill="none" stroke="#c8c8c8" stroke-width="1.1" stroke-linejoin="round"/></g>
<g transform="translate(148.38,288.05)"><path d="M2 0.6 L7.4 4.5 L2 8.4Z" fill="#6c6c6c"/></g>
<g transform="translate(159.18,285.75) scale(1.031)"><path d="M6.5 0.9 L11.6 3.6 L11.6 9.4 L6.5 12.1 L1.4 9.4 L1.4 3.6Z M1.4 3.6 L6.5 6.4 L11.6 3.6 M6.5 6.4 L6.5 12.1" fill="none" stroke="#c8c8c8" stroke-width="1.1" stroke-linejoin="round"/></g>
<g transform="translate(148.38,301.93)"><path d="M2 0.6 L7.4 4.5 L2 8.4Z" fill="#6c6c6c"/></g>
<g transform="translate(159.18,299.62) scale(1.031)"><path d="M6.5 0.9 L11.6 3.6 L11.6 9.4 L6.5 12.1 L1.4 9.4 L1.4 3.6Z M1.4 3.6 L6.5 6.4 L11.6 3.6 M6.5 6.4 L6.5 12.1" fill="none" stroke="#c8c8c8" stroke-width="1.1" stroke-linejoin="round"/></g>
<g transform="translate(148.38,315.8)"><path d="M2 0.6 L7.4 4.5 L2 8.4Z" fill="#6c6c6c"/></g>
<g transform="translate(159.18,313.5) scale(1.031)"><path d="M6.5 0.9 L11.6 3.6 L11.6 9.4 L6.5 12.1 L1.4 9.4 L1.4 3.6Z M1.4 3.6 L6.5 6.4 L11.6 3.6 M6.5 6.4 L6.5 12.1" fill="none" stroke="#c8c8c8" stroke-width="1.1" stroke-linejoin="round"/></g>
<g transform="translate(148.38,329.68)"><path d="M2 0.6 L7.4 4.5 L2 8.4Z" fill="#6c6c6c"/></g>
<g transform="translate(159.18,327.38) scale(1.031)"><path d="M6.5 0.9 L11.6 3.6 L11.6 9.4 L6.5 12.1 L1.4 9.4 L1.4 3.6Z M1.4 3.6 L6.5 6.4 L11.6 3.6 M6.5 6.4 L6.5 12.1" fill="none" stroke="#c8c8c8" stroke-width="1.1" stroke-linejoin="round"/></g>
<g transform="translate(99.9,343.55)"><path d="M2 0.6 L7.4 4.5 L2 8.4Z" fill="#6c6c6c"/></g>
<g transform="translate(110.7,341.25) scale(1.031)"><path d="M6.5 0.9 L11.6 3.6 L11.6 9.4 L6.5 12.1 L1.4 9.4 L1.4 3.6Z M1.4 3.6 L6.5 6.4 L11.6 3.6 M6.5 6.4 L6.5 12.1" fill="none" stroke="#c8c8c8" stroke-width="1.1" stroke-linejoin="round"/></g>
<g transform="translate(110.7,355.12) scale(1.031)"><path d="M6.5 0.9 L11.6 3.6 L11.6 9.4 L6.5 12.1 L1.4 9.4 L1.4 3.6Z M1.4 3.6 L6.5 6.4 L11.6 3.6 M6.5 6.4 L6.5 12.1" fill="none" stroke="#c8c8c8" stroke-width="1.1" stroke-linejoin="round"/></g>
<g transform="translate(75.66,371.3)"><path d="M0.6 2 L8.4 2 L4.5 7.4Z" fill="#6c6c6c"/></g>
<g transform="translate(86.46,369) scale(1.031)"><path d="M6.5 0.9 L11.6 3.6 L11.6 9.4 L6.5 12.1 L1.4 9.4 L1.4 3.6Z M1.4 3.6 L6.5 6.4 L11.6 3.6 M6.5 6.4 L6.5 12.1" fill="none" stroke="#c8c8c8" stroke-width="1.1" stroke-linejoin="round"/></g>
<g transform="translate(87.78,385.18)"><path d="M0.6 2 L8.4 2 L4.5 7.4Z" fill="#6c6c6c"/></g>
<g transform="translate(98.58,382.88) scale(1.031)"><path d="M6.5 0.9 L11.6 3.6 L11.6 9.4 L6.5 12.1 L1.4 9.4 L1.4 3.6Z M1.4 3.6 L6.5 6.4 L11.6 3.6 M6.5 6.4 L6.5 12.1" fill="none" stroke="#c8c8c8" stroke-width="1.1" stroke-linejoin="round"/></g>
<g transform="translate(99.9,399.05)"><path d="M0.6 2 L8.4 2 L4.5 7.4Z" fill="#6c6c6c"/></g>
<g transform="translate(110.7,396.75) scale(1.031)"><path d="M6.5 0.9 L11.6 3.6 L11.6 9.4 L6.5 12.1 L1.4 9.4 L1.4 3.6Z M1.4 3.6 L6.5 6.4 L11.6 3.6 M6.5 6.4 L6.5 12.1" fill="none" stroke="#c8c8c8" stroke-width="1.1" stroke-linejoin="round"/></g>
<g transform="translate(112.02,412.93)"><path d="M0.6 2 L8.4 2 L4.5 7.4Z" fill="#6c6c6c"/></g>
<g transform="translate(122.82,410.62) scale(1.031)"><path d="M6.5 0.9 L11.6 3.6 L11.6 9.4 L6.5 12.1 L1.4 9.4 L1.4 3.6Z M1.4 3.6 L6.5 6.4 L11.6 3.6 M6.5 6.4 L6.5 12.1" fill="none" stroke="#c8c8c8" stroke-width="1.1" stroke-linejoin="round"/></g>
<g transform="translate(134.94,424.5) scale(1.031)"><path d="M6.5 0.9 L11.6 3.6 L11.6 9.4 L6.5 12.1 L1.4 9.4 L1.4 3.6Z M1.4 3.6 L6.5 6.4 L11.6 3.6 M6.5 6.4 L6.5 12.1" fill="none" stroke="#c8c8c8" stroke-width="1.1" stroke-linejoin="round"/></g>
<g transform="translate(75.66,440.68)"><path d="M2 0.6 L7.4 4.5 L2 8.4Z" fill="#6c6c6c"/></g>
<g transform="translate(86.46,438.38) scale(1.031)"><path d="M6.5 0.9 L11.6 3.6 L11.6 9.4 L6.5 12.1 L1.4 9.4 L1.4 3.6Z M1.4 3.6 L6.5 6.4 L11.6 3.6 M6.5 6.4 L6.5 12.1" fill="none" stroke="#c8c8c8" stroke-width="1.1" stroke-linejoin="round"/></g>
<g transform="translate(62.22,452.25) scale(1.031)"><path d="M6.5 0.9 L11.6 3.6 L11.6 9.4 L6.5 12.1 L1.4 9.4 L1.4 3.6Z M1.4 3.6 L6.5 6.4 L11.6 3.6 M6.5 6.4 L6.5 12.1" fill="none" stroke="#c8c8c8" stroke-width="1.1" stroke-linejoin="round"/></g>
<g transform="translate(62.22,466.12) scale(1.031)"><path d="M6.5 0.9 L11.6 3.6 L11.6 9.4 L6.5 12.1 L1.4 9.4 L1.4 3.6Z M1.4 3.6 L6.5 6.4 L11.6 3.6 M6.5 6.4 L6.5 12.1" fill="none" stroke="#c8c8c8" stroke-width="1.1" stroke-linejoin="round"/></g>
<g transform="translate(62.22,480) scale(1.031)"><path d="M6.5 0.9 L11.6 3.6 L11.6 9.4 L6.5 12.1 L1.4 9.4 L1.4 3.6Z M1.4 3.6 L6.5 6.4 L11.6 3.6 M6.5 6.4 L6.5 12.1" fill="none" stroke="#c8c8c8" stroke-width="1.1" stroke-linejoin="round"/></g>

<g transform="translate(4.2,562.6)"><path d="M0.4 0.8 Q0.4 0.3 0.9 0.3 H4 L5 1.6 H9.9 Q10.4 1.6 10.4 2.1 V8.2 Q10.4 8.7 9.9 8.7 H0.9 Q0.4 8.7 0.4 8.2Z" fill="#cccccc"/></g>
<g transform="translate(75.6,562)"><rect x="0.4" y="0.4" width="9" height="9" rx="1" fill="#d0d0d0"/><path d="M1.6 2.6 H8.2 M1.6 4.8 H8.2 M1.6 7 H8.2" stroke="#282828" stroke-width="0.9"/></g>
<g transform="translate(991.6,561.6)"><rect x="0.8" y="4.6" width="7" height="4.6" fill="none" stroke="#d0d0d0" stroke-width="1.2"/><path d="M2.2 4.6 V3.2 A2.2 2.2 0 0 1 6.6 3.2" fill="none" stroke="#d0d0d0" stroke-width="1.2"/></g>
<g transform="translate(3.8,579)"><path d="M5.5 0.3 V10.7 M0.3 5.5 H10.7" stroke="#dcdcdc" stroke-width="1.7" fill="none"/></g>
<g transform="translate(18.6,582.8)"><path d="M0 0 H6.4 L3.2 3.6Z" fill="#c4c4c4"/></g>
<g transform="translate(660.4,581)"><circle cx="3" cy="3" r="2.1" fill="none" stroke="#b0b0b0" stroke-width="1.1"/><path d="M4.6 4.6 L7 7" stroke="#b0b0b0" stroke-width="1.3"/></g>
<g transform="translate(923.4,578.6)"><rect x="1.4" y="0.6" width="4.4" height="4" fill="#c8c8c8"/><circle cx="3.8" cy="8.4" r="2.8" fill="#c8c8c8"/><path d="M6.6 3 L10.4 6.8 L8 7.2Z" fill="#c8c8c8"/></g>
<g transform="translate(945.6,579.4)"><path d="M5.6 0.6 H10.6 V5.6 L5.4 10.4 L0.8 5.6Z" fill="#c8c8c8" transform="rotate(8 6 5)"/><circle cx="8.4" cy="3" r="0.9" fill="#444"/></g>
<g transform="translate(969,579.6)"><path d="M5.5 0.6 L7 4 L10.6 4.3 L7.9 6.7 L8.7 10.3 L5.5 8.4 L2.3 10.3 L3.1 6.7 L0.4 4.3 L4 4Z" fill="#9a9a9a"/></g>
<g transform="translate(989.4,579.4)"><path d="M0.6 5.4 Q6.5 -0.6 12.6 5.4 Q6.5 11 0.6 5.4Z" fill="none" stroke="#bdbdbd" stroke-width="1.1"/><circle cx="6.6" cy="5.4" r="1.7" fill="#bdbdbd"/><path d="M1.4 9.8 L11.8 0.8" stroke="#bdbdbd" stroke-width="1.2"/></g>
<g transform="translate(0.8,596.4)"><path d="M2 0.6 L7.4 4.5 L2 8.4Z" fill="#6e6e6e"/></g>
<g transform="translate(13.4,595)"><path d="M5.5 0.4 L7.1 3.9 L10.8 4.3 L8 6.8 L8.8 10.5 L5.5 8.6 L2.2 10.5 L3 6.8 L0.2 4.3 L3.9 3.9Z" fill="#f4bc3c"/></g>
<g transform="translate(0.8,623.96)"><path d="M0.6 2 L8.4 2 L4.5 7.4Z" fill="#6e6e6e"/></g>
<g transform="translate(13.6,623.56)"><path d="M0.5 1.2 H4.2 L5.2 2.4 H9.8 V3.6 H2.6 L0.5 8.4Z" fill="#d0d0d0"/><path d="M2.9 4.3 H11.6 L9.6 9 H0.8Z" fill="#d0d0d0"/></g>
<g transform="translate(12.6,637.74)"><path d="M2 0.6 L7.4 4.5 L2 8.4Z" fill="#6e6e6e"/></g>
<g transform="translate(25.6,637.74)"><path d="M0.4 0.8 Q0.4 0.3 0.9 0.3 H4 L5 1.6 H9.9 Q10.4 1.6 10.4 2.1 V8.2 Q10.4 8.7 9.9 8.7 H0.9 Q0.4 8.7 0.4 8.2Z" fill="#cdcdcd"/></g>
<g transform="translate(25.6,651.52)"><path d="M0.4 0.8 Q0.4 0.3 0.9 0.3 H4 L5 1.6 H9.9 Q10.4 1.6 10.4 2.1 V8.2 Q10.4 8.7 9.9 8.7 H0.9 Q0.4 8.7 0.4 8.2Z" fill="#cdcdcd"/></g>
<g transform="translate(12.6,665.3)"><path d="M2 0.6 L7.4 4.5 L2 8.4Z" fill="#6e6e6e"/></g>
<g transform="translate(25.6,665.3)"><path d="M0.4 0.8 Q0.4 0.3 0.9 0.3 H4 L5 1.6 H9.9 Q10.4 1.6 10.4 2.1 V8.2 Q10.4 8.7 9.9 8.7 H0.9 Q0.4 8.7 0.4 8.2Z" fill="#cdcdcd"/></g>
<g transform="translate(0.8,679.63)"><path d="M2 0.6 L7.4 4.5 L2 8.4Z" fill="#6e6e6e"/></g>
<g transform="translate(13.8,679.631)"><path d="M0.4 0.8 Q0.4 0.3 0.9 0.3 H4 L5 1.6 H9.9 Q10.4 1.6 10.4 2.1 V8.2 Q10.4 8.7 9.9 8.7 H0.9 Q0.4 8.7 0.4 8.2Z" fill="#cdcdcd"/></g>
<g transform="translate(119.2,631)"><path d="M0.4 3 Q0.4 0.4 3 0.4 H14 Q15.6 0.4 16.6 1.8 L19.6 6.4 H39 Q41.6 6.4 41.6 9 V32 Q41.6 34.6 39 34.6 H3 Q0.4 34.6 0.4 32Z" fill="#c3c3c3"/></g>
<g transform="translate(184.6,631)"><path d="M0.4 3 Q0.4 0.4 3 0.4 H14 Q15.6 0.4 16.6 1.8 L19.6 6.4 H39 Q41.6 6.4 41.6 9 V32 Q41.6 34.6 39 34.6 H3 Q0.4 34.6 0.4 32Z" fill="#c3c3c3"/></g>
<g transform="translate(250.6,631)"><path d="M0.4 3 Q0.4 0.4 3 0.4 H14 Q15.6 0.4 16.6 1.8 L19.6 6.4 H39 Q41.6 6.4 41.6 9 V32 Q41.6 34.6 39 34.6 H3 Q0.4 34.6 0.4 32Z" fill="#c3c3c3"/></g>
</svg>
</div>
</body></html>
